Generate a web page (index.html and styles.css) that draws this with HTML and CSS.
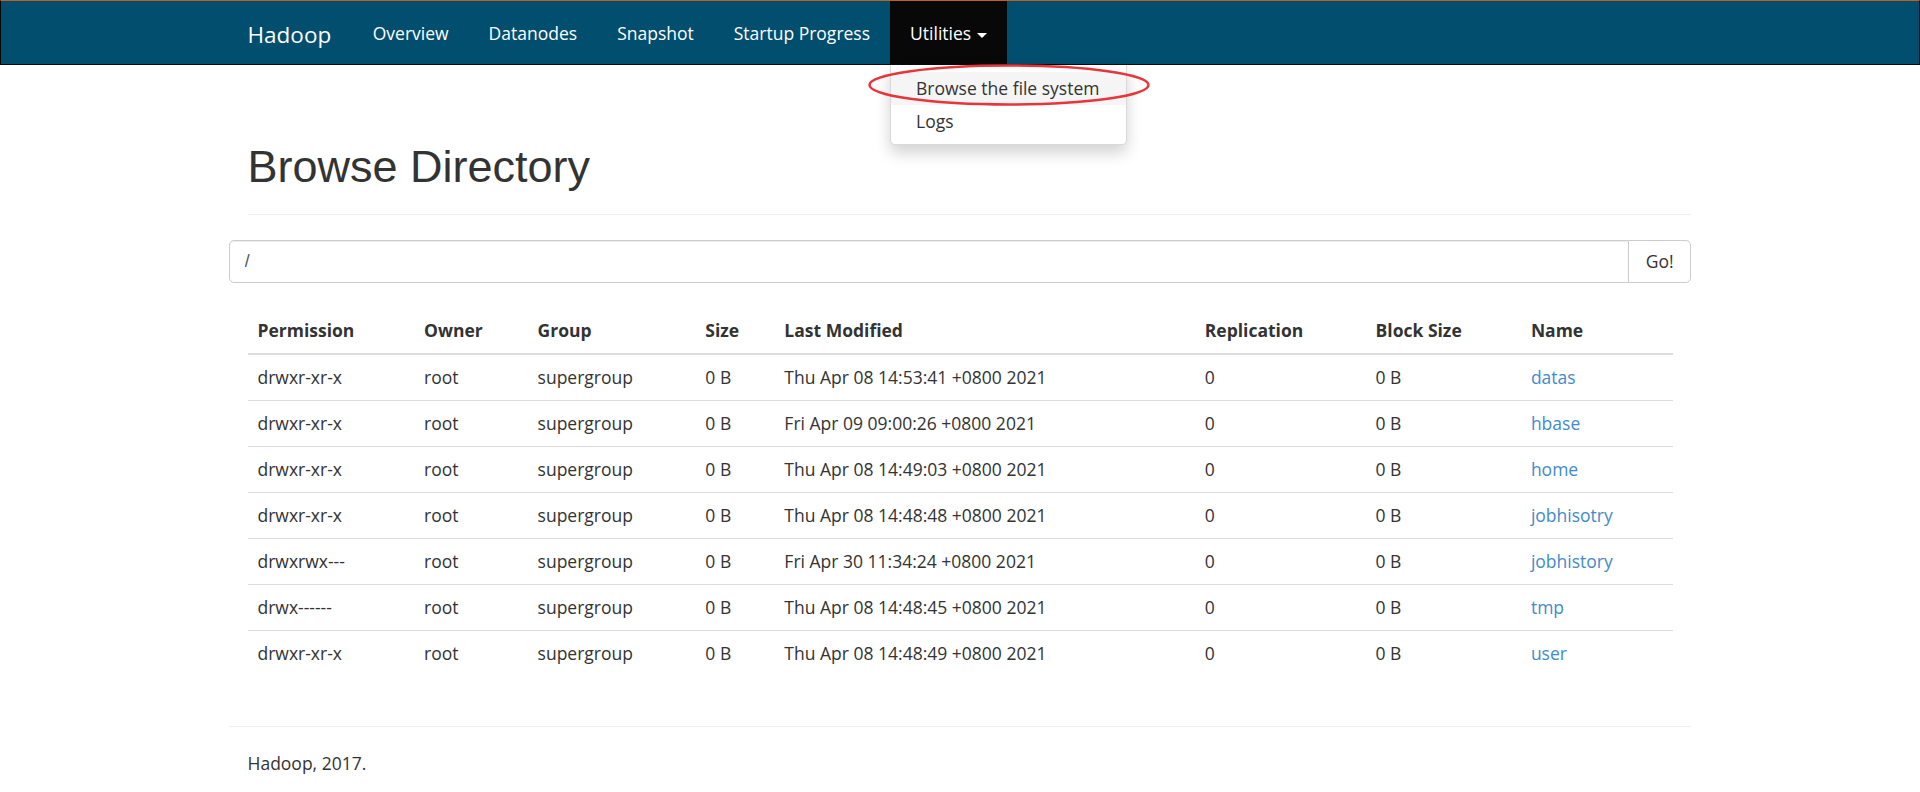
FILE: index.html
```html
<!DOCTYPE html>
<html lang="en">
<head>
    <meta charset="UTF-8">
    <title>Browsing HDFS</title>
    <link rel="stylesheet" href="styles.css">
</head>
<body>
<nav class="navbar">
    <div class="container navInner">
        <a class="brand" href="#">Hadoop</a>
        <ul class="nav">
            <li><a href="#">Overview</a></li>
            <li><a href="#">Datanodes</a></li>
            <li><a href="#">Snapshot</a></li>
            <li><a href="#">Startup Progress</a></li>
            <li class="dropdown open">
                <a href="#">Utilities <span class="caret"></span></a>
                <ul class="dropdownMenu">
                    <li class="active"><a href="#">Browse the file system</a></li>
                    <li><a href="#">Logs</a></li>
                    <!-- 截图上的红圈标注 -->
                    <svg class="mark" width="286" height="46" viewBox="0 0 286 46">
                        <ellipse cx="142" cy="21" rx="139.5" ry="19.5" fill="none" stroke="#e8343b" stroke-width="2.5"/>
                    </svg>
                </ul>
            </li>
        </ul>
    </div>
</nav>

<div class="container">
    <div class="pageHeader">
        <h1>Browse Directory</h1>
    </div>

    <form class="inputGroup" onsubmit="return false">
        <input class="formControl" type="text" value="/">
        <button class="btn" type="submit">Go!</button>
    </form>

    <table class="table">
        <colgroup>
            <col style="width:166.5px">
            <col style="width:113.5px">
            <col style="width:167.7px">
            <col style="width:79px">
            <col style="width:420.3px">
            <col style="width:170.7px">
            <col style="width:155.3px">
            <col style="width:151.5px">
        </colgroup>
        <thead>
        <tr>
            <th>Permission</th>
            <th>Owner</th>
            <th>Group</th>
            <th>Size</th>
            <th>Last Modified</th>
            <th>Replication</th>
            <th>Block Size</th>
            <th>Name</th>
        </tr>
        </thead>
        <tbody>
        <tr>
            <td>drwxr-xr-x</td><td>root</td><td>supergroup</td><td>0 B</td>
            <td>Thu Apr 08 14:53:41 +0800 2021</td><td>0</td><td>0 B</td>
            <td><a href="#">datas</a></td>
        </tr>
        <tr>
            <td>drwxr-xr-x</td><td>root</td><td>supergroup</td><td>0 B</td>
            <td>Fri Apr 09 09:00:26 +0800 2021</td><td>0</td><td>0 B</td>
            <td><a href="#">hbase</a></td>
        </tr>
        <tr>
            <td>drwxr-xr-x</td><td>root</td><td>supergroup</td><td>0 B</td>
            <td>Thu Apr 08 14:49:03 +0800 2021</td><td>0</td><td>0 B</td>
            <td><a href="#">home</a></td>
        </tr>
        <tr>
            <td>drwxr-xr-x</td><td>root</td><td>supergroup</td><td>0 B</td>
            <td>Thu Apr 08 14:48:48 +0800 2021</td><td>0</td><td>0 B</td>
            <td><a href="#">jobhisotry</a></td>
        </tr>
        <tr>
            <td>drwxrwx---</td><td>root</td><td>supergroup</td><td>0 B</td>
            <td>Fri Apr 30 11:34:24 +0800 2021</td><td>0</td><td>0 B</td>
            <td><a href="#">jobhistory</a></td>
        </tr>
        <tr>
            <td>drwx------</td><td>root</td><td>supergroup</td><td>0 B</td>
            <td>Thu Apr 08 14:48:45 +0800 2021</td><td>0</td><td>0 B</td>
            <td><a href="#">tmp</a></td>
        </tr>
        <tr>
            <td>drwxr-xr-x</td><td>root</td><td>supergroup</td><td>0 B</td>
            <td>Thu Apr 08 14:48:49 +0800 2021</td><td>0</td><td>0 B</td>
            <td><a href="#">user</a></td>
        </tr>
        </tbody>
    </table>

    <hr class="footerLine">
    <div class="footer">
        <p>Hadoop, 2017.</p>
    </div>
</div>
</body>
</html>
```

FILE: styles.css
```css
*{
    margin: 0;
    padding: 0;
    box-sizing: border-box;
}
ul,li{
    list-style: none;
}
a{
    text-decoration: none;
}
body{
    font-family: "Open Sans", "Noto Sans CJK SC", sans-serif;
    font-size: 17.5px;
    line-height: 25px;
    color: #333;
    background-color: #fff;
}
.container{
    width: 1462.5px;
    margin: 0 auto;
    padding: 0 18.75px;
}

/*顶部导航*/
.navbar{
    background-color: #024e6e;
    border-top: 1px solid #c0601f;
    border-left: 1px solid #080808;
    border-right: 1px solid #080808;
    border-bottom: 1px solid #080808;
}
.navbar .navInner{
    display: flex;
    align-items: stretch;
    height: 63px;
}
.navbar .brand{
    margin-left: -18.75px;
    padding: 21px 21.5px 0 18.75px;
    font-size: 22.5px;
    line-height: 25px;
    color: #fff;
}
.navbar .nav{
    display: flex;
}
.navbar .nav > li{
    position: relative;
}
.navbar .nav > li > a{
    display: block;
    height: 63px;
    padding: 20px 20px 0;
    color: #fff;
}
.navbar .nav > li.open > a{
    background-color: #080808;
}
.caret{
    display: inline-block;
    width: 0;
    height: 0;
    margin-left: 1px;
    vertical-align: middle;
    border-top: 5px solid #fff;
    border-left: 5px solid transparent;
    border-right: 5px solid transparent;
}

/*下拉菜单*/
.dropdownMenu{
    position: absolute;
    top: 100%;
    left: 0;
    z-index: 10;
    min-width: 237px;
    padding: 6.75px 0 6.25px;
    margin-top: 1px;
    background-color: #fff;
    border: 1px solid rgba(0,0,0,.15);
    border-top: 0;
    border-radius: 0 0 5px 5px;
    box-shadow: 0 7.5px 15px rgba(0,0,0,.175);
}
.dropdownMenu li a{
    display: block;
    padding: 4.25px 25px 3.75px;
    color: #333;
    white-space: nowrap;
}
.dropdownMenu li.active a{
    background-color: #f5f5f5;
}
.dropdownMenu .mark{
    position: absolute;
    left: -24px;
    top: -1px;
}

/*标题*/
.pageHeader{
    margin: 77px -18.75px 25px 0;
    padding-bottom: 10px;
    border-bottom: 1px solid #eee;
}
.pageHeader h1{
    font-family: "Liberation Sans", Arial, sans-serif;
    font-size: 45px;
    font-weight: 500;
    line-height: 49.5px;
    margin-bottom: 12.5px;
}

/*路径输入框*/
.inputGroup{
    display: flex;
    margin: 0 -18.75px 25px;
    height: 42.5px;
}
.inputGroup .formControl{
    flex: 1;
    height: 42.5px;
    padding: 0 15px;
    font-family: "Liberation Sans", Arial, sans-serif;
    font-size: 17.5px;
    color: #555;
    border: 1px solid #ccc;
    border-radius: 5px 0 0 5px;
    box-shadow: inset 0 1px 1px rgba(0,0,0,.075);
    outline: none;
}
.inputGroup .btn{
    width: 63px;
    height: 42.5px;
    margin-left: -1px;
    font-family: "Open Sans", sans-serif;
    font-size: 17.5px;
    color: #333;
    background-color: #fff;
    border: 1px solid #ccc;
    border-radius: 0 5px 5px 0;
}

/*目录表格*/
.table{
    width: 100%;
    table-layout: fixed;
    border-collapse: collapse;
    margin-bottom: 50px;
}
.table th,
.table td{
    padding: 10px;
    text-align: left;
    vertical-align: top;
    white-space: nowrap;
}
.table th{
    font-weight: 700;
    border-bottom: 2px solid #ddd;
}
.table td{
    border-top: 1px solid #ddd;
}
.table thead + tbody tr:first-child td{
    border-top: 0;
}
.table td a{
    color: #428bca;
}

/*页脚*/
.footerLine{
    margin: 0 -18.75px 24.5px;
    border: 0;
    border-top: 1px solid #eee;
}
.footer p{
    margin-bottom: 12px;
}
```
